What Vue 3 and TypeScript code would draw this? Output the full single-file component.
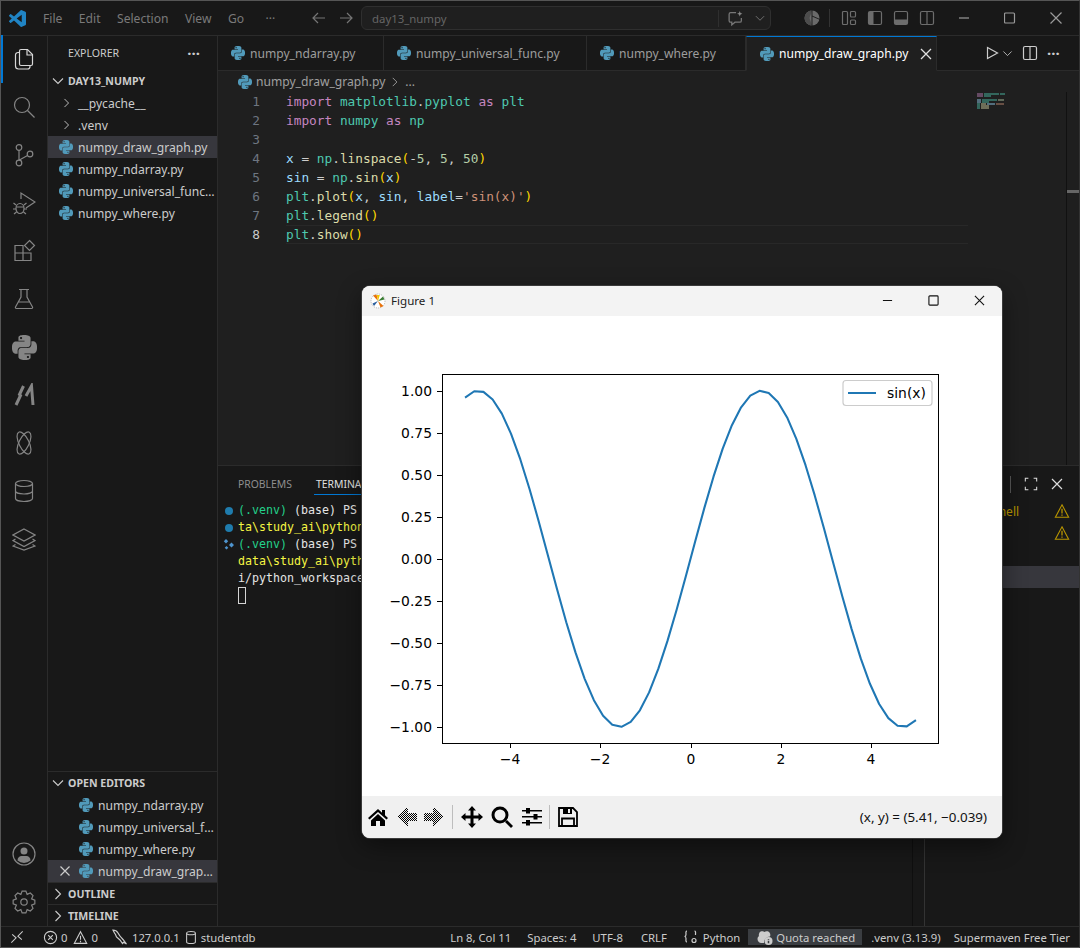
<template>
  <div class="root">
    <svg class="defs" aria-hidden="true">
      <symbol id="py" viewBox="0 0 24 24">
        <path fill="currentColor" d="M14.25.18l.9.2.73.26.59.3.45.32.34.34.25.34.16.33.1.3.04.26.02.2-.01.13V8.5l-.05.63-.13.55-.21.46-.26.38-.3.31-.33.25-.35.19-.35.14-.33.1-.3.07-.26.04-.21.02H8.77l-.69.05-.59.14-.5.22-.41.27-.33.32-.27.35-.2.36-.15.37-.1.35-.07.32-.04.27-.02.21v3.06H3.17l-.21-.03-.28-.07-.32-.12-.35-.18-.36-.26-.36-.36-.35-.46-.32-.59-.28-.73-.21-.88-.14-1.05-.05-1.23.06-1.22.16-1.04.24-.87.32-.71.36-.57.4-.44.42-.33.42-.24.4-.16.36-.1.32-.05.24-.01h.16l.06.01h8.16v-.83H6.18l-.01-2.75-.02-.37.05-.34.11-.31.17-.28.25-.26.31-.23.38-.2.44-.18.51-.15.58-.12.64-.1.71-.06.77-.04.84-.02 1.27.05zm-6.3 1.98l-.23.33-.08.41.08.41.23.34.33.22.41.09.41-.09.33-.22.23-.34.08-.41-.08-.41-.23-.33-.33-.22-.41-.09-.41.09zm13.09 3.95l.28.06.32.12.35.18.36.27.36.35.35.47.32.59.28.73.21.88.14 1.04.05 1.23-.06 1.23-.16 1.04-.24.86-.32.71-.36.57-.4.45-.42.33-.42.24-.4.16-.36.09-.32.05-.24.02-.16-.01h-8.22v.82h5.84l.01 2.76.02.36-.05.34-.11.31-.17.29-.25.25-.31.24-.38.2-.44.17-.51.15-.58.13-.64.09-.71.07-.77.04-.84.01-1.27-.04-1.07-.14-.9-.2-.73-.25-.59-.3-.45-.33-.34-.34-.25-.34-.16-.33-.1-.3-.04-.25-.02-.2.01-.13v-5.34l.05-.64.13-.54.21-.46.26-.38.3-.32.33-.24.35-.2.35-.14.33-.1.3-.06.26-.04.21-.02.13-.01h5.84l.69-.05.59-.14.5-.21.41-.28.33-.32.27-.35.2-.36.15-.36.1-.35.07-.32.04-.28.02-.21V6.07h2.09l.14.01zm-6.47 14.25l-.23.33-.08.41.08.41.23.33.33.23.41.08.41-.08.33-.23.23-.33.08-.41-.08-.41-.23-.33-.33-.23-.41-.08-.41.08z" />
      </symbol>
      <symbol id="warn" viewBox="0 0 16 16">
        <path fill="none" stroke="currentColor" stroke-width="1.1" d="M8 1.8l6.6 12.4H1.4z" />
        <path fill="none" stroke="currentColor" stroke-width="1.3" d="M8 5.8v4.6M8 11.4v1.4" />
      </symbol>
    </svg>

    <header class="titlebar">
      <div class="title-left">
        <svg class="logo" viewBox="0 0 24 24" width="17" height="17">
          <path fill="#2084c4" d="M23.15 2.587L18.21.21a1.494 1.494 0 0 0-1.705.29l-9.46 8.63-4.12-3.128a.999.999 0 0 0-1.276.057L.327 7.261A1 1 0 0 0 .326 8.74L3.899 12 .326 15.26a1 1 0 0 0 .001 1.479L1.65 17.94a.999.999 0 0 0 1.276.057l4.12-3.128 9.46 8.63a1.492 1.492 0 0 0 1.704.29l4.942-2.377A1.5 1.5 0 0 0 24 20.06V3.939a1.5 1.5 0 0 0-.85-1.352zm-5.146 14.861L10.826 12l7.178-5.448v10.896z" />
        </svg>
        <nav class="menu">
          <span v-for="m in menus" :key="m">{{ m }}</span>
        </nav>
      </div>
      <div class="nav-arrows">
        <svg viewBox="0 0 16 16" width="16" height="16"><path d="M14 8H2.5M7 3L2 8l5 5" /></svg>
        <svg viewBox="0 0 16 16" width="16" height="16"><path d="M2 8h11.5M9 3l5 5-5 5" /></svg>
      </div>
      <div class="command-box">
        <span class="command-text">day13_numpy</span>
        <span class="command-side">
          <svg viewBox="0 0 16 16" width="17" height="17"><path d="M8.5 2.5H3.5A1.5 1.5 0 0 0 2 4v6a1.5 1.5 0 0 0 1.5 1.5H4.5V14l3-2.5h4.5A1.5 1.5 0 0 0 13.5 10V7.5" /><path class="spark" d="M12 1l.7 1.8L14.5 3.5l-1.8.7L12 6l-.7-1.8L9.5 3.5l1.8-.7z" /></svg>
          <svg viewBox="0 0 16 16" width="12" height="12"><path d="M2.5 5.5L8 11l5.5-5.5" /></svg>
        </span>
      </div>
      <div class="title-right">
        <svg class="orb" viewBox="0 0 16 16" width="16" height="16">
          <circle cx="8" cy="8" r="7.5" fill="#6a6a6a" />
          <path fill="#4c4c4c" d="M8 .5A7.5 7.5 0 0 0 8 15.5L5.5 8z" />
          <path fill="none" stroke="#181818" stroke-width=".9" d="M8 0v16M8 6l8 3.5" />
        </svg>
        <i class="title-sep"></i>
        <svg viewBox="0 0 16 16" width="16" height="16"><rect x="1.5" y="1.5" width="5" height="13" rx="1" /><rect x="9.5" y="1.5" width="5" height="5.5" rx="1" /><rect x="9.5" y="10" width="5" height="4.5" rx="1" /></svg>
        <svg viewBox="0 0 16 16" width="16" height="16"><rect x="1.5" y="1.5" width="13" height="13" rx="1.5" /><path class="fill" d="M2 2h4.5v12H2z" /></svg>
        <svg viewBox="0 0 16 16" width="16" height="16"><rect x="1.5" y="1.5" width="13" height="13" rx="1.5" /><path class="fill" d="M2 9.5h12V14H2z" /></svg>
        <svg viewBox="0 0 16 16" width="16" height="16"><rect x="1.5" y="1.5" width="13" height="13" rx="1.5" /><path d="M8 1.5v13" /></svg>
      </div>
      <div class="win-controls">
        <svg viewBox="0 0 12 12" width="12" height="12"><path d="M1 6h10" /></svg>
        <svg viewBox="0 0 12 12" width="12" height="12"><rect x=".5" y="1" width="10" height="10" rx="1" /></svg>
        <svg viewBox="0 0 12 12" width="12" height="12"><path d="M.5 .5l11 11M11.5 .5l-11 11" /></svg>
      </div>
    </header>

    <div class="workbench">
      <aside class="activity">
        <div class="act-group">
          <div class="act active">
            <svg viewBox="0 0 24 24" width="24" height="24"><path d="M9 2.5h6.5L20.5 7.5V17a1.5 1.5 0 0 1-1.5 1.5H9A1.5 1.5 0 0 1 7.5 17V4A1.5 1.5 0 0 1 9 2.5z" /><path d="M15 2.5v5.5h5.5" /><path d="M7.5 5.5H6A2.5 2.5 0 0 0 3.5 8v11A3 3 0 0 0 6.5 22h9a2.5 2.5 0 0 0 2.5-2.5v-1" /></svg>
          </div>
          <div class="act"><svg viewBox="0 0 24 24" width="24" height="24"><circle cx="10" cy="10" r="7.5" /><path d="M15.5 15.5l7 7" /></svg></div>
          <div class="act"><svg viewBox="0 0 24 24" width="24" height="24"><circle cx="7" cy="4.5" r="2.8" /><circle cx="7" cy="20" r="2.8" /><circle cx="18" cy="11" r="2.8" /><path d="M7 7.3v9.9M15.5 12.5l-8.5 4.7" /></svg></div>
          <div class="act"><svg viewBox="0 0 24 24" width="24" height="24"><path d="M9 8V2l14 9-9 6" /><ellipse cx="8" cy="17.5" rx="4" ry="5" /><path d="M4 14l-2.5-2M12 14l2.5-2M4 18H1M12 18h3M4.5 21L2 23M11.5 21l2.5 2M4.5 16h7" /></svg></div>
          <div class="act"><svg viewBox="0 0 24 24" width="24" height="24"><path d="M3 6.5h8v15H3zM3 14h16v7.5h-8M11 14V6.5" /><path d="M17.5 1.5l5 5-5 5-5-5z" /></svg></div>
          <div class="act"><svg viewBox="0 0 24 24" width="24" height="24"><path d="M7 2.5h10M9 2.5v7.5L3.5 20a1 1 0 0 0 .9 1.5h15.2a1 1 0 0 0 .9-1.5L15 10V2.5M6.5 15h11" /></svg></div>
          <div class="act"><svg class="py-act" width="25" height="25"><use href="#py" /></svg></div>
          <div class="act"><svg viewBox="0 0 24 24" width="24" height="24"><path class="thick" d="M4 22L8.5 12.5L7.5 11.5L11.5 3M14 13l5.5-10L21 22" /></svg></div>
          <div class="act"><svg viewBox="0 0 24 24" width="24" height="24"><ellipse cx="12" cy="12" rx="5" ry="12" transform="rotate(-26 12 12)" /><ellipse cx="12" cy="12" rx="5" ry="12" transform="rotate(26 12 12)" /></svg></div>
          <div class="act"><svg viewBox="0 0 24 24" width="24" height="24"><ellipse cx="12" cy="4.5" rx="8.5" ry="3" /><path d="M3.5 4.5v15c0 1.7 3.8 3 8.5 3s8.5-1.3 8.5-3v-15M3.5 12c0 1.7 3.8 3 8.5 3s8.5-1.3 8.5-3" /></svg></div>
          <div class="act"><svg viewBox="0 0 24 24" width="24" height="24"><path d="M12 2l11 6-11 6L1 8zM3.5 12L1 13.5l11 6 11-6-2.5-1.5M3.5 17.5L1 19l11 4 11-4-2.5-1.5" /></svg></div>
        </div>
        <div class="act-group">
          <div class="act">
            <svg viewBox="0 0 24 24" width="24" height="24"><circle cx="12" cy="12" r="11" /><circle class="fill" cx="12" cy="9" r="3.5" /><path class="fill" d="M5.5 18.5c0-3 2-4.5 4-4.5h5c2 0 4 1.500 4 4.500A10 10 0 0 1 12 21a10 10 0 0 1-6.500-2.500z" /></svg>
          </div>
          <div class="act"><svg viewBox="0 0 24 24" width="24" height="24"><path :d="gearPath" /><circle cx="12" cy="12" r="3.2" /></svg></div>
        </div>
      </aside>

      <aside class="sidebar">
        <div class="explorer-head">
          <span>EXPLORER</span>
          <span class="dots">···</span>
        </div>
        <div class="section-head">
          <svg class="chev" viewBox="0 0 16 16" width="16" height="16"><path d="M3 5.5l5 5 5-5" /></svg>
          <span>DAY13_NUMPY</span>
        </div>
        <div class="tree">
          <div v-for="f in folders" :key="f" class="row">
            <svg class="chev folder-chev" viewBox="0 0 16 16" width="16" height="16"><path d="M5.5 3l5 5-5 5" /></svg>
            <span>{{ f }}</span>
          </div>
          <div v-for="f in files" :key="f" class="row file-row" :class="{ selected: f === 'numpy_draw_graph.py' }">
            <svg class="py-icon" width="14" height="14"><use href="#py" /></svg>
            <span class="row-name">{{ f }}</span>
          </div>
        </div>
        <div class="open-editors">
          <div class="section-head">
            <svg class="chev" viewBox="0 0 16 16" width="16" height="16"><path d="M3 5.5l5 5 5-5" /></svg>
            <span>OPEN EDITORS</span>
          </div>
          <div v-for="f in openFiles" :key="f.name" class="row open-row" :class="{ selected: f.active }">
            <svg v-if="f.active" class="close-x" viewBox="0 0 12 12" width="12" height="12"><path d="M1.5 1.5l9 9M10.5 1.5l-9 9" /></svg>
            <svg class="py-icon" width="14" height="14"><use href="#py" /></svg>
            <span class="row-name">{{ f.name }}</span>
          </div>
        </div>
        <div class="section-head collapsed">
          <svg class="chev" viewBox="0 0 16 16" width="16" height="16"><path d="M5.5 3l5 5-5 5" /></svg>
          <span>OUTLINE</span>
        </div>
        <div class="section-head collapsed">
          <svg class="chev" viewBox="0 0 16 16" width="16" height="16"><path d="M5.5 3l5 5-5 5" /></svg>
          <span>TIMELINE</span>
        </div>
      </aside>

      <main class="editor-area">
        <div class="tabbar">
          <div class="tabs">
            <div v-for="t in tabs" :key="t" class="tab" :class="{ active: t === 'numpy_draw_graph.py' }">
              <svg class="py-icon" width="14" height="14"><use href="#py" /></svg>
              <span>{{ t }}</span>
              <svg v-if="t === 'numpy_draw_graph.py'" class="tab-close" viewBox="0 0 12 12" width="12" height="12"><path d="M1 1l10 10M11 1L1 11" /></svg>
            </div>
          </div>
          <div class="tab-actions">
            <svg viewBox="0 0 16 16" width="16" height="16"><path d="M3.5 2.5v11L13.5 8z" /></svg>
            <svg class="small" viewBox="0 0 16 16" width="11" height="11"><path d="M2 5l6 6 6-6" /></svg>
            <svg class="split" viewBox="0 0 16 16" width="16" height="16"><rect x="1.5" y="1.5" width="13" height="13" rx="1.5" /><path d="M8 1.5v13" /></svg>
            <span class="dots">···</span>
          </div>
        </div>

        <div class="breadcrumb">
          <svg class="py-icon" width="14" height="14"><use href="#py" /></svg>
          <span>numpy_draw_graph.py</span>
          <svg viewBox="0 0 16 16" width="12" height="12"><path d="M5 2.5l5.5 5.5L5 13.5" /></svg>
          <span>...</span>
        </div>

        <div class="editor">
          <div class="code">
            <div v-for="(line, i) in code" :key="i" class="line" :class="{ current: i === 7 }">
              <span class="ln">{{ i + 1 }}</span>
              <span class="src"><span v-for="(t, j) in line" :key="j" :class="t[1]">{{ t[0] }}</span></span>
            </div>
          </div>
          <div class="minimap">
            <div v-for="(bars, i) in minimap" :key="i" class="mini-line">
              <i v-for="(b, j) in bars" :key="j" :class="b"></i>
            </div>
          </div>
          <div class="scroll-gutter"><i></i></div>
        </div>

        <section class="panel">
          <div class="panel-head">
            <span class="ptab">PROBLEMS</span>
            <span class="ptab on">TERMINAL</span>
            <span class="panel-actions">
              <i class="panel-sep"></i>
              <svg viewBox="0 0 16 16" width="14" height="14"><path d="M1.5 5V1.5H5M11 1.5h3.5V5M14.5 11v3.5H11M5 14.5H1.5V11" /></svg>
              <svg viewBox="0 0 12 12" width="12" height="12"><path d="M1 1l10 10M11 1L1 11" /></svg>
            </span>
          </div>
          <div class="panel-body">
            <div class="terminal">
              <div v-for="(l, i) in term" :key="i" class="tline">
                <span class="deco">
                  <i v-if="l.deco === 'dot'" class="dot"></i>
                  <svg v-else-if="l.deco === 'run'" class="run-deco" viewBox="0 0 12 12" width="12" height="12"><path fill="#4e94ce" d="M3 0l2.2 2.2L3 4.4.8 2.2zM8.5 3.5L11 6 8.5 8.5 6 6zM3.5 7l1.8 1.8-1.8 1.8-1.8-1.8z" /></svg>
                </span>
                <span><span v-for="(t, j) in l.parts" :key="j" :class="t[1]">{{ t[0] }}</span></span>
              </div>
              <div class="tline"><span class="deco"></span><i class="term-cursor"></i></div>
            </div>
            <div class="term-scroll"></div>
            <div class="term-list">
              <div class="term-item"><span class="term-name">powershell</span><svg class="warn" width="16" height="16"><use href="#warn" /></svg></div>
              <div class="term-item"><span></span><svg class="warn" width="16" height="16"><use href="#warn" /></svg></div>
              <div class="term-item"></div>
              <div class="term-item picked"></div>
            </div>
          </div>
        </section>
      </main>
    </div>

    <footer class="statusbar">
      <div class="st-left">
        <svg class="st-remote" viewBox="0 0 16 16" width="14" height="14"><path d="M1.5 14.5L7 9 2.5 5M14.5 1.5L9 7l4.5 4" /></svg>
        <span class="st-item st-problems">
          <svg viewBox="0 0 16 16" width="15" height="15"><circle cx="8" cy="8" r="6.5" /><path d="M5.5 5.5l5 5M10.5 5.5l-5 5" /></svg>0
          <svg class="st-warn" viewBox="0 0 16 16" width="15" height="15"><path d="M8 1.8l6.6 12.4H1.4zM8 6v4.5M8 11.5V13" /></svg>0
        </span>
        <span class="st-item st-host">
          <svg viewBox="0 0 16 16" width="16" height="16"><path d="M1 1c2.5 0 4 1.2 5 3 1 2 3 4.500 5 6.500l3.500 4.500-3-1.700-1 1.200-2.500-3.500L4.500 8 3.500 5.500 2.500 4z" /></svg>127.0.0.1
        </span>
        <span class="st-item st-db">
          <svg viewBox="0 0 16 16" width="14" height="15"><ellipse cx="8" cy="3" rx="5" ry="1.8" /><path d="M3 3v10c0 1 2.2 1.8 5 1.8s5-.8 5-1.8V3" /></svg>studentdb
        </span>
      </div>
      <div class="st-right">
        <span class="st-r">Ln 8, Col 11</span>
        <span class="st-r">Spaces: 4</span>
        <span class="st-r">UTF-8</span>
        <span class="st-r st-crlf">CRLF</span>
        <span class="st-r st-lang">
          <svg viewBox="0 0 16 16" width="16" height="16"><path d="M4 2C2.5 2 3 4 3 5.5S2.5 7.5 1.5 7.5C2.5 7.5 3 8 3 9.5S2.5 13 4 13M11.5 2c1.5 0 1 2 1 3.500v.5" /><circle cx="11" cy="11.5" r="2" /></svg>Python
        </span>
        <span class="st-quota">
          <svg viewBox="0 0 16 16" width="17" height="16"><path class="fill" d="M3 3.5C4 2 7 2 8 3c1-1 4-1 5 .5 1 1.5 1 3 .5 4a6 6 0 0 0-6 6.5H5C2.5 14 1 12 1 10c0-2 1-2.5 1.5-3-.5-1 0-2.500.5-3.500z" /><circle class="fill" cx="12" cy="12" r="4" /><path class="cut" d="M12 10v.8M12 11.8v2.4" /></svg>Quota reached
        </span>
        <span class="st-r st-venv">.venv (3.13.9)</span>
        <span class="st-r st-maven">Supermaven Free Tier</span>
      </div>
    </footer>

    <!-- matplotlib window, floats over the editor -->
    <div class="figure">
      <div class="fig-title">
        <svg class="fig-logo" viewBox="0 0 16 16" width="16" height="16">
          <circle cx="8" cy="8" r="7" fill="#fff" stroke="#999" stroke-width=".7" stroke-dasharray="1 1" />
          <path d="M8 8L3 2.5L6.5 1.5z" fill="#e8710a" />
          <path d="M8 8L13.5 13L10.5 14.5z" fill="#e8710a" />
          <path d="M8 8l5-4.5 1.5 3z" fill="#3a7d34" />
          <path d="M8 8L2.5 10.5l1.5 2.5z" fill="#2a5d9c" />
          <path d="M8 8L6.8 2h3z" fill="#f2c500" />
        </svg>
        <span class="fig-name">Figure 1</span>
        <div class="fig-controls">
          <svg viewBox="0 0 12 12" width="11" height="11"><path d="M1 6h10" /></svg>
          <svg viewBox="0 0 12 12" width="11" height="11"><rect x="1" y="1" width="10" height="10" rx="1" /></svg>
          <svg viewBox="0 0 12 12" width="11" height="11"><path d="M1 1l10 10M11 1L1 11" /></svg>
        </div>
      </div>
      <svg class="plot" viewBox="0 0 640 480" width="640" height="480">
        <g stroke="#000" stroke-width="1" shape-rendering="crispEdges">
          <line v-for="t in xTicks" :key="t.label" :x1="t.x" :x2="t.x" y1="427" y2="432" />
          <line v-for="t in yTicks" :key="t.label" x1="75" x2="80" :y1="t.y" :y2="t.y" />
        </g>
        <polyline :points="sinePoints" fill="none" stroke="#1f77b4" stroke-width="2.08" stroke-linejoin="round" />
        <rect x="80.5" y="58.5" width="496" height="369" fill="none" stroke="#000" stroke-width="1" shape-rendering="crispEdges" />
        <g class="tick-text">
          <text v-for="t in xTicks" :key="t.label" :x="t.x" y="448" text-anchor="middle">{{ t.label }}</text>
          <text v-for="t in yTicks" :key="t.label" x="70" :y="t.y + 5" text-anchor="end">{{ t.label }}</text>
        </g>
        <rect x="481" y="64.5" width="89" height="25" rx="3" fill="#fff" fill-opacity=".8" stroke="#ccc" />
        <line x1="486" x2="514" y1="77" y2="77" stroke="#1f77b4" stroke-width="2.08" />
        <text class="tick-text" x="525" y="82">sin(x)</text>
      </svg>
      <div class="fig-toolbar">
        <div class="fig-tools">
          <svg viewBox="0 0 22 18" width="22" height="18"><path d="M11 1L1 10l1.5 1.5L11 4l8.5 7.5L21 10l-3-2.7V2h-3v2.7z" /><path d="M4 12.5L11 6l7 6.5V18h-5v-5H9v5H4z" /></svg>
          <svg class="arrow" viewBox="0 0 20 20" width="20" height="20" shape-rendering="crispEdges"><path v-for="d in ditherBack" :key="d" :d="d" /></svg>
          <svg class="arrow arrow-next" viewBox="0 0 20 20" width="20" height="20" shape-rendering="crispEdges"><path v-for="d in ditherBack" :key="d" :d="d" /></svg>
          <i class="fig-sep"></i>
          <svg viewBox="0 0 22 22" width="22" height="22"><path d="M11 0l4 4.5h-2.5v5h5V7l4.5 4-4.5 4v-2.5h-5v5H15L11 22l-4-4.5h2.5v-5h-5V15L0 11l4.5-4v2.5h5v-5H7z" /></svg>
          <svg viewBox="0 0 22 22" width="22" height="22"><circle cx="9" cy="9" r="7" fill="none" stroke="#000" stroke-width="3" /><path d="M14 16l2-2 6 6-2 2z" /></svg>
          <svg viewBox="0 0 22 20" width="22" height="20"><path d="M1 3h20v1.6H1zM1 9h20v1.6H1zM1 15h20v1.6H1z" /><path d="M5 1h4v5.5H5zM12.5 7h4v5.5h-4zM5 13h4v5.5H5z" /></svg>
          <i class="fig-sep sep-tight"></i>
          <svg viewBox="0 0 20 20" width="20" height="20"><path fill="none" stroke="#000" stroke-width="1.8" d="M1 1h14l4 4v14H1z" /><path d="M5 1h9v6H5z" /><path fill="#f0f0f0" d="M10 2h2v4h-2z" /><path fill="none" stroke="#000" stroke-width="1.8" d="M4 18.5v-7h12v7" /></svg>
        </div>
        <span class="fig-coord">(x, y) = (5.41, −0.039)</span>
      </div>
    </div>
  </div>
</template>

<script setup lang="ts">
import { computed } from 'vue'

type Tok = [string, string]

const menus = ['File', 'Edit', 'Selection', 'View', 'Go', '···']
const folders = ['__pycache__', '.venv']
const files = ['numpy_draw_graph.py', 'numpy_ndarray.py', 'numpy_universal_func.py', 'numpy_where.py']
const tabs = ['numpy_ndarray.py', 'numpy_universal_func.py', 'numpy_where.py', 'numpy_draw_graph.py']
const openFiles = [
  { name: 'numpy_ndarray.py', active: false },
  { name: 'numpy_universal_func.py', active: false },
  { name: 'numpy_where.py', active: false },
  { name: 'numpy_draw_graph.py', active: true },
]

const code: Tok[][] = [
  [['import', 'k'], [' ', ''], ['matplotlib', 'c'], ['.', 'p'], ['pyplot', 'c'], [' ', ''], ['as', 'k'], [' ', ''], ['plt', 'c']],
  [['import', 'k'], [' ', ''], ['numpy', 'c'], [' ', ''], ['as', 'k'], [' ', ''], ['np', 'c']],
  [],
  [['x', 'v'], [' = ', 'p'], ['np', 'c'], ['.', 'p'], ['linspace', 'f'], ['(', 'b'], ['-', 'p'], ['5', 'n'], [', ', 'p'], ['5', 'n'], [', ', 'p'], ['50', 'n'], [')', 'b']],
  [['sin', 'v'], [' = ', 'p'], ['np', 'c'], ['.', 'p'], ['sin', 'f'], ['(', 'b'], ['x', 'v'], [')', 'b']],
  [['plt', 'c'], ['.', 'p'], ['plot', 'f'], ['(', 'b'], ['x', 'v'], [', ', 'p'], ['sin', 'v'], [', ', 'p'], ['label', 'v'], ['=', 'p'], ["'sin(x)'", 's'], [')', 'b']],
  [['plt', 'c'], ['.', 'p'], ['legend', 'f'], ['()', 'b']],
  [['plt', 'c'], ['.', 'p'], ['show', 'f'], ['()', 'b']],
]

const minimap: string[][] = [
  ['m-k', 'm-c', 'm-c2'],
  ['m-k', 'm-c3'],
  [],
  ['m-v', 'm-c', 'm-n'],
  ['m-v', 'm-c3'],
  ['m-c1', 'm-f', 'm-v2', 'm-s'],
  ['m-c1', 'm-y'],
  ['m-c1', 'm-y'],
]

// only what shows left of the figure window
const term: { deco: string; parts: Tok[] }[] = [
  { deco: 'dot', parts: [['(.venv)', 't-g'], [' (base) PS', 't-w']] },
  { deco: 'dot', parts: [['ta\\study_ai\\python', 't-y']] },
  { deco: 'run', parts: [['(.venv)', 't-g'], [' (base) PS', 't-w']] },
  { deco: '', parts: [['data\\study_ai\\pyth', 't-y']] },
  { deco: '', parts: [['i/python_workspace', 't-w']] },
]

// same numbers matplotlib gives for a 640x480 figure at 100 dpi
const axes = { left: 80.5, width: 496, top: 58, height: 369.6 }
const xScale = axes.width / 11
const xPos = (x: number) => axes.left + (x + 5.5) * xScale

const sineData = Array.from({ length: 50 }, (_, i) => {
  const x = -5 + (10 * i) / 49
  return [x, Math.sin(x)] as const
})
const yMax = Math.max(...sineData.map((p) => Math.abs(p[1])))
const yLimit = yMax * 1.1
const yPos = (y: number) => axes.top + ((yLimit - y) / (2 * yLimit)) * axes.height

const sinePoints = computed(() =>
  sineData.map(([x, y]) => `${xPos(x).toFixed(2)},${yPos(y).toFixed(2)}`).join(' '),
)

const minus = (v: string) => v.replace('-', '−')
const xTicks = [-4, -2, 0, 2, 4].map((v) => ({ label: minus(String(v)), x: Math.round(xPos(v)) }))
const yTicks = [1, 0.75, 0.5, 0.25, 0, -0.25, -0.5, -0.75, -1].map((v) => ({
  label: minus(v.toFixed(2)),
  y: Math.round(yPos(v)),
}))

// tk's disabled arrows are stippled, one pixel on, one off
const ditherBack = computed(() => {
  const out: string[] = []
  for (let y = 0; y < 20; y++) {
    const dist = Math.abs(y - 9.5)
    const headStart = Math.round(dist)
    const end = dist <= 3.5 ? 19 : 10
    if (dist > 9) continue
    for (let x = headStart; x <= end; x++) {
      if ((x + y) % 2 === 0) out.push(`M${x} ${y}h1v1h-1z`)
    }
  }
  return out
})

const gearPath = computed(() => {
  const pts: string[] = []
  const teeth = 8
  for (let i = 0; i < teeth; i++) {
    const a = (i / teeth) * Math.PI * 2
    const step = (Math.PI * 2) / teeth
    const list: [number, number][] = [
      [8.2, a - step * 0.5],
      [11, a - step * 0.22],
      [11, a + step * 0.22],
      [8.2, a + step * 0.5],
    ]
    for (const [r, t] of list) {
      pts.push(`${(12 + r * Math.cos(t)).toFixed(2)} ${(12 + r * Math.sin(t)).toFixed(2)}`)
    }
  }
  return `M${pts.join('L')}z`
})
</script>

<style>
html,
body {
  margin: 0;
  background: #181818;
}
</style>

<style scoped>
.root {
  position: relative;
  width: 1080px;
  height: 948px;
  box-sizing: border-box;
  display: flex;
  flex-direction: column;
  overflow: hidden;
  border: 1px solid #555;
  border-right-color: #333;
  background: #181818;
  color: #ccc;
  font-family: 'Noto Sans', sans-serif;
  font-size: 12.1px;
}
.defs {
  position: absolute;
  width: 0;
  height: 0;
}
svg {
  flex: none;
  fill: none;
  stroke: currentColor;
  stroke-width: 1.2;
}
svg .fill {
  fill: currentColor;
  stroke: none;
}

/* title bar */
.titlebar {
  flex: none;
  height: 34px;
  display: flex;
  align-items: center;
  background: #181818;
  border-bottom: 1px solid #2b2b2b;
  color: #757575;
}
.title-left {
  width: 300px;
  display: flex;
  align-items: center;
  padding-left: 8px;
  box-sizing: border-box;
}
.logo {
  stroke: none;
}
.menu {
  display: flex;
  gap: 16.5px;
  margin-left: 17px;
  color: #7a7a7a;
}
.menu span:last-child {
  margin-left: 5px;
}
.nav-arrows {
  width: 60px;
  display: flex;
  gap: 11px;
  padding-left: 10px;
  box-sizing: border-box;
}
.command-box {
  width: 410px;
  height: 24px;
  box-sizing: border-box;
  display: flex;
  align-items: center;
  justify-content: space-between;
  border: 1px solid #2f2f2f;
  border-radius: 6px;
  background: #1f1f1f;
  padding: 0 4px 0 10px;
  font-size: 11.4px;
  color: #656565;
}
.command-side {
  display: flex;
  align-items: center;
  gap: 10px;
  padding-left: 8px;
  border-left: 1px solid #2f2f2f;
  color: #777;
}
.spark {
  fill: #8a8a8a;
  stroke: none;
}
.title-right {
  display: flex;
  align-items: center;
  margin-left: 33px;
  gap: 10px;
  color: #6d6d6d;
}
.orb {
  stroke: none;
}
.title-sep {
  width: 1px;
  height: 18px;
  background: #333;
  margin: 0 1px 0 -1px;
}
.win-controls {
  display: flex;
  gap: 34px;
  margin-left: 23px;
  color: #9a9a9a;
}

.workbench {
  flex: 1;
  min-height: 0;
  display: flex;
}

/* activity bar */
.activity {
  flex: none;
  width: 47px;
  box-sizing: border-box;
  border-right: 1px solid #2b2b2b;
  display: flex;
  flex-direction: column;
  justify-content: space-between;
  color: #858585;
}
.act-group:first-child {
  margin-top: -1px;
}
.act {
  height: 48px;
  display: flex;
  align-items: center;
  justify-content: center;
}
.act.active {
  color: #d7d7d7;
  box-shadow: inset 2px 0 0 #0078d4;
}
.py-act {
  stroke: none;
}
.thick {
  stroke-width: 3;
}

/* sidebar */
.sidebar {
  flex: none;
  width: 170px;
  box-sizing: border-box;
  border-right: 1px solid #2b2b2b;
  display: flex;
  flex-direction: column;
}
.explorer-head {
  height: 34px;
  flex: none;
  display: flex;
  align-items: center;
  justify-content: space-between;
  padding: 0 17px 0 20px;
  font-size: 10.6px;
  color: #cccccc;
}
.dots {
  font-size: 15px;
  font-weight: 700;
  color: #ccc;
}
.section-head {
  flex: none;
  height: 22px;
  display: flex;
  align-items: center;
  gap: 2px;
  padding-left: 2px;
  font-size: 10.6px;
  font-weight: 700;
  color: #cccccc;
}
.collapsed {
  border-top: 1px solid #2b2b2b;
  box-sizing: border-box;
}
.chev {
  stroke-width: 1.1;
}
.tree {
  flex: 1;
  min-height: 0;
}
.row {
  height: 22px;
  display: flex;
  align-items: center;
  padding-left: 12px;
  gap: 5px;
  color: #cccccc;
  white-space: nowrap;
  overflow: hidden;
}
.folder-chev {
  width: 13px;
}
.file-row {
  padding-left: 11px;
}
.row-name {
  overflow: hidden;
  text-overflow: ellipsis;
  min-width: 0;
  padding-right: 1px;
}
.selected {
  background: #37373d;
}
.py-icon {
  color: #519aba;
  stroke: none;
}
.open-editors {
  border-top: 1px solid #2b2b2b;
  flex: none;
}
.open-row {
  padding-left: 31px;
}
.close-x {
  margin-left: -20px;
  margin-right: 3px;
  color: #ccc;
}

/* editor */
.editor-area {
  flex: 1;
  min-width: 0;
  display: flex;
  flex-direction: column;
  background: #1f1f1f;
}
.tabbar {
  flex: none;
  height: 35px;
  display: flex;
  justify-content: space-between;
  background: #181818;
  box-sizing: border-box;
}
.tabs {
  display: grid;
  grid-template-columns: 166px 203px 159px 191px;
}
.tab {
  display: flex;
  align-items: center;
  gap: 5px;
  padding-left: 13px;
  box-sizing: border-box;
  border-right: 1px solid #2b2b2b;
  border-bottom: 1px solid #2b2b2b;
  color: #9d9d9d;
  white-space: nowrap;
  overflow: hidden;
}
.tab.active {
  background: #1f1f1f;
  color: #fff;
  border-top: 1px solid #0078d4;
  border-bottom-color: #1f1f1f;
  border-left: 1px solid #2b2b2b;
}
.tab-close {
  margin-left: 7px;
  stroke-width: 1.3;
  color: #e0e0e0;
}
.tab-actions {
  flex: 1;
  display: flex;
  align-items: center;
  padding: 0 13px 0 47px;
  border-bottom: 1px solid #2b2b2b;
  color: #cccccc;
}
.tab-actions .small {
  margin-left: 2px;
}
.tab-actions .split {
  margin-left: 9px;
}
.tab-actions .dots {
  margin-left: 9px;
}
.breadcrumb {
  flex: none;
  height: 21px;
  display: flex;
  align-items: center;
  gap: 4px;
  padding-left: 20px;
  color: #a0a0a0;
}
.editor {
  flex: 1;
  min-height: 0;
  display: flex;
}
.code {
  width: 750px;
  flex: none;
  font-family: 'DejaVu Sans Mono', monospace;
  font-size: 12.79px;
}
.line {
  height: 19px;
  line-height: 19px;
  display: flex;
  white-space: pre;
}
.ln {
  width: 42px;
  text-align: right;
  color: #6e7681;
  margin-right: 26px;
  flex: none;
}
.src {
  flex: 1;
  box-sizing: border-box;
}
.current .ln {
  color: #cccccc;
}
.current .src {
  border-top: 1px solid #282828;
  border-bottom: 1px solid #282828;
  line-height: 17px;
}
.k {
  color: #c586c0;
}
.c {
  color: #4ec9b0;
}
.p {
  color: #cccccc;
}
.v {
  color: #9cdcfe;
}
.f {
  color: #dcdcaa;
}
.n {
  color: #b5cea8;
}
.b {
  color: #ffd700;
}
.s {
  color: #ce9178;
}
.minimap {
  width: 98px;
  flex: none;
  padding: 1px 0 0 9px;
  box-sizing: border-box;
}
.mini-line {
  height: 2px;
  display: flex;
  gap: 1px;
}
.mini-line i {
  height: 2px;
  opacity: 0.42;
}
.m-k {
  width: 6px;
  background: #c586c0;
}
.m-c {
  width: 15px;
  background: #4ec9b0;
}
.m-c1 {
  width: 3px;
  background: #4ec9b0;
}
.m-c2 {
  width: 5px;
  background: #4ec9b0;
}
.m-c3 {
  width: 7px;
  background: #4ec9b0;
}
.m-v {
  width: 4px;
  background: #9cdcfe;
}
.m-v2 {
  width: 8px;
  background: #9cdcfe;
}
.m-n {
  width: 6px;
  background: #b5cea8;
}
.m-f {
  width: 5px;
  background: #dcdcaa;
}
.m-s {
  width: 8px;
  background: #ce9178;
}
.m-y {
  width: 8px;
  background: #dcdcaa;
}
.scroll-gutter {
  flex: 1;
  border-left: 1px solid #111;
  padding-top: 98px;
}
.scroll-gutter i {
  display: block;
  height: 3px;
  background: #666;
}

/* panel */
.panel {
  flex: none;
  height: 461px;
  box-sizing: border-box;
  border-top: 1px solid #2b2b2b;
  background: #181818;
  display: flex;
  flex-direction: column;
}
.panel-head {
  height: 34px;
  flex: none;
  display: flex;
  align-items: flex-start;
  padding-left: 20px;
  gap: 22px;
  font-size: 10.4px;
  color: #8f8f8f;
}
.ptab {
  height: 29px;
  line-height: 36px;
  box-sizing: border-box;
}
.ptab.on {
  color: #e0e0e0;
  border-bottom: 1px solid #0078d4;
  padding: 0 2px;
  width: 60px;
}
.panel-actions {
  margin-left: auto;
  display: flex;
  align-items: center;
  height: 36px;
  padding-right: 16px;
  gap: 13px;
  color: #ddd;
}
.panel-sep {
  width: 1px;
  height: 17px;
  background: #555;
}
.panel-body {
  flex: 1;
  min-height: 0;
  display: flex;
}
.terminal {
  width: 694px;
  flex: none;
  overflow: hidden;
  padding-top: 2px;
  font-family: 'DejaVu Sans Mono', monospace;
  font-size: 11.63px;
  white-space: pre;
}
.tline {
  height: 17px;
  line-height: 17px;
  display: flex;
  align-items: center;
}
.deco {
  width: 20px;
  flex: none;
  display: flex;
  justify-content: center;
  padding-left: 2px;
  box-sizing: border-box;
}
.dot {
  width: 8px;
  height: 8px;
  border-radius: 50%;
  background: #1f7cad;
}
.run-deco {
  stroke: none;
}
.t-g {
  color: #23d18b;
}
.t-w {
  color: #e5e5e5;
}
.t-y {
  color: #f5f543;
}
.term-cursor {
  width: 6px;
  height: 15px;
  border: 1px solid #d4d4d4;
}
.term-scroll {
  width: 13px;
  box-sizing: border-box;
  border-left: 1px solid #0f0f0f;
  border-right: 1px solid #333;
  flex: none;
}
.term-list {
  flex: 1;
  min-width: 0;
}
.term-item {
  height: 22px;
  display: flex;
  align-items: center;
  justify-content: space-between;
  padding: 0 9px 0 32px;
  color: #b89500;
}
.term-item.picked {
  background: #37373d;
}
.warn {
  stroke: none;
  color: #b89500;
}

/* status bar */
.statusbar {
  flex: none;
  height: 21px;
  box-sizing: border-box;
  display: flex;
  justify-content: space-between;
  align-items: stretch;
  border-top: 1px solid #2b2b2b;
  font-size: 11.3px;
  color: #cccccc;
}
.st-left,
.st-right,
.st-item,
.st-r,
.st-quota {
  display: flex;
  align-items: center;
}
.st-remote {
  margin-left: 9px;
}
.st-item {
  gap: 3px;
}
.st-problems {
  margin-left: 19px;
}
.st-warn {
  margin-left: 3px;
}
.st-host {
  margin-left: 14px;
  gap: 4px;
}
.st-db {
  margin-left: 4px;
}
.st-r {
  margin-left: 16px;
  gap: 4px;
}
.st-crlf {
  margin-left: 18px;
}
.st-quota {
  margin-left: 8px;
  padding: 0 7px 0 8px;
  gap: 3px;
  background: #3a3d41;
}
.st-quota .cut {
  stroke: #3a3d41;
  stroke-width: 1.5;
}
.st-venv {
  margin-left: 9px;
}
.st-maven {
  margin-left: 13px;
  margin-right: 9px;
}

/* figure window */
.figure {
  position: absolute;
  left: 361px;
  top: 285px;
  width: 640px;
  height: 552px;
  display: flex;
  flex-direction: column;
  border-radius: 8px;
  overflow: hidden;
  background: #fff;
  box-shadow: 0 0 0 1px #3a3a3a, 0 8px 24px rgba(0, 0, 0, 0.45);
}
.fig-title {
  flex: none;
  height: 30px;
  box-sizing: border-box;
  padding: 0 0 1px 8px;
  display: flex;
  align-items: center;
  background: #f3f3f3;
  color: #000;
  font-size: 11.6px;
}
.fig-logo {
  stroke: none;
}
.fig-name {
  margin-left: 5px;
  color: #222;
}
.fig-controls {
  margin-left: auto;
  display: flex;
  gap: 35px;
  padding-right: 17px;
  color: #111;
}
.plot {
  flex: none;
  display: block;
  stroke: none;
}
.tick-text,
.tick-text text {
  font-family: 'DejaVu Sans', sans-serif;
  font-size: 13.89px;
  fill: #000;
  stroke: none;
}
.fig-toolbar {
  flex: 1;
  display: flex;
  align-items: center;
  justify-content: space-between;
  background: #f0f0f0;
  padding: 0 15px 0 5px;
}
.fig-tools {
  display: flex;
  align-items: center;
  gap: 8px;
}
.fig-tools svg {
  fill: #000;
  stroke: none;
}
.arrow-next {
  transform: scaleX(-1);
  margin-left: -1px;
}
.fig-sep {
  width: 1px;
  height: 24px;
  background: #bdbdbd;
}
.sep-tight {
  margin-left: -2px;
}
.fig-coord {
  font-size: 13.4px;
  color: #111;
}
</style>
